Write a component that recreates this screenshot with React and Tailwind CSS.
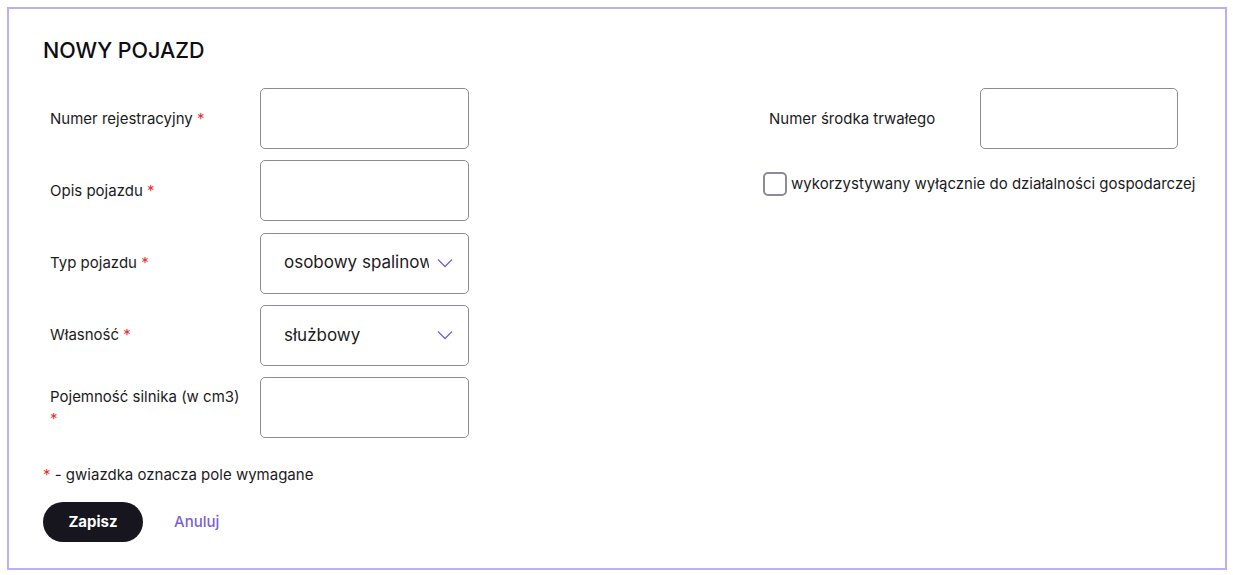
import React from "react";

function Star() {
  return <span className="text-[#e5322d]">*</span>;
}

function Chevron() {
  return (
    <svg width="16" height="10" viewBox="0 0 16 10" fill="none" className="shrink-0">
      <path d="M1 1.5 L8 8.5 L15 1.5" stroke="#7b5fd6" strokeWidth="1.3" />
    </svg>
  );
}

function Row({ label, required, children }) {
  return (
    <div className="flex items-center">
      <div className="w-[196px] pl-[7px] box-content text-[15px] leading-[22px] text-[#1c1b22]">
        {label}
        {required && (
          <>
            {" "}
            <Star />
          </>
        )}
      </div>
      <div className="ml-[14px]">{children}</div>
    </div>
  );
}

function Input({ w = "w-[209px]" }) {
  return (
    <div className={`${w} h-[61px] rounded-[5px] border border-[#8e8a99] bg-white`} />
  );
}

function Select({ value }) {
  return (
    <div className="w-[209px] h-[61px] rounded-[5px] border border-[#8e8a99] bg-white flex items-center pl-[23px] pr-[15px] gap-2">
      <span className="flex-1 overflow-hidden whitespace-nowrap text-[17px] text-[#1c1b22]">{value}</span>
      <Chevron />
    </div>
  );
}

export default function App() {
  return (
    <div className="w-[1233px] h-[575px] bg-white p-[7px] pr-[6px] pb-[5px] font-['Inter',sans-serif]">
      <div className="w-[1220px] h-[563px] border-2 border-[#bcaef7] px-[34px] pt-[26px]">
        <h1 className="text-[21.5px] leading-[30px] text-[#0d0d12] font-medium">NOWY POJAZD</h1>
        <div className="flex mt-[23px]">
          <div className="w-[720px] shrink-0 flex flex-col gap-[11.25px]">
            <Row label="Numer rejestracyjny" required>
              <Input />
            </Row>
            <Row label="Opis pojazdu" required>
              <Input />
            </Row>
            <Row label="Typ pojazdu" required>
              <Select value="osobowy spalinowy" />
            </Row>
            <Row label="Własność" required>
              <Select value="służbowy" />
            </Row>
            <Row label="Pojemność silnika (w cm3)" required>
              <Input />
            </Row>
          </div>
          <div className="flex flex-col">
            <div className="flex items-center">
              <div className="w-[201px] pl-[6px] box-content text-[15px] leading-[22px] text-[#1c1b22]">
                Numer środka trwałego
              </div>
              <div className="ml-[10px]">
                <Input w="w-[198px]" />
              </div>
            </div>
            <label className="flex items-center gap-[4px] mt-[23px] whitespace-nowrap">
              <span className="w-[24px] h-[24px] rounded-[5px] border-2 border-[#8e8a99] bg-white" />
              <span className="text-[15px] text-[#1c1b22]">
                wykorzystywany wyłącznie do działalności gospodarczej
              </span>
            </label>
          </div>
        </div>
        <p className="mt-[26px] text-[15px] leading-[22px] text-[#1c1b22]">
          <Star /> - gwiazdka oznacza pole wymagane
        </p>
        <div className="flex items-center mt-[16px] gap-[31px]">
          <button className="w-[100px] h-[40px] rounded-full bg-[#17161e] text-white text-[15px] font-bold">
            Zapisz
          </button>
          <span className="text-[#7b5fd6] text-[15px] font-medium">Anuluj</span>
        </div>
      </div>
    </div>
  );
}
